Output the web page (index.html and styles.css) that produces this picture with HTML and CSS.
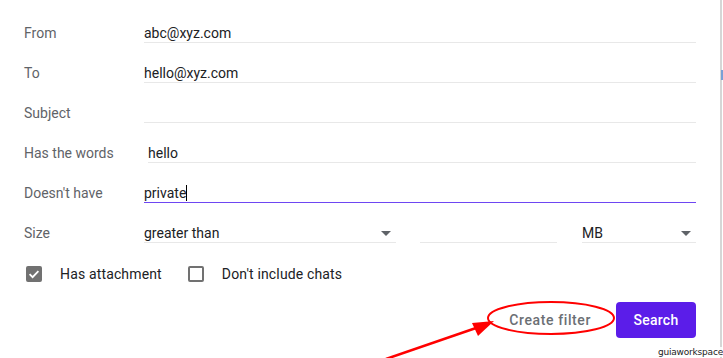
FILE: index.html
```html
<!DOCTYPE html>
<html lang="en">
<head>
  <meta charset="UTF-8" />
  <meta name="viewport" content="width=device-width, initial-scale=1.0"/>
  <title>Search filter</title>
  <link rel="stylesheet" href="styles.css">
</head>
<body>
  <div class="dialog">
    <div class="row">
      <span class="label">From</span>
      <span class="field">abc@xyz.com</span>
    </div>
    <div class="row">
      <span class="label">To</span>
      <span class="field">hello@xyz.com</span>
    </div>
    <div class="row">
      <span class="label">Subject</span>
      <span class="field"></span>
    </div>
    <div class="row">
      <span class="label">Has the words</span>
      <span class="field indent">hello</span>
    </div>
    <div class="row">
      <span class="label">Doesn't have</span>
      <span class="field focused">private<span class="caret"></span></span>
    </div>
    <div class="row">
      <span class="label">Size</span>
      <div class="size-fields">
        <span class="field select compare">greater than<span class="arrow"></span></span>
        <span class="field amount"></span>
        <span class="field select unit">MB<span class="arrow"></span></span>
      </div>
    </div>

    <div class="checks">
      <label class="check"><span class="box checked"><svg viewBox="0 0 16 16" width="16" height="16"><path d="M3.6 8.2l3 3 5.8-6" fill="none" stroke="#fff" stroke-width="1.8"/></svg></span>Has attachment</label>
      <label class="check"><span class="box"></span>Don't include chats</label>
    </div>

    <div class="actions">
      <button class="btn-text">Create filter</button>
      <button class="btn-primary">Search</button>
    </div>
  </div>

  <svg class="annotation" width="723" height="358" viewBox="0 0 723 358">
    <ellipse cx="551" cy="318" rx="63" ry="16" fill="none" stroke="#f00" stroke-width="2"/>
    <line x1="386" y1="359" x2="476" y2="328" stroke="#f00" stroke-width="2.5"/>
    <polygon points="494,321 472,323 478,336" fill="#f00"/>
  </svg>

  <div class="scroll-edge"><span class="thumb"></span></div>
  <span class="watermark">guiaworkspace</span>
</body>
</html>
```

FILE: styles.css
```css
:root {
  --label: #5f6368;
  --text: #202124;
  --line: #e8e8e8;
  --accent: #5b1de9;
  --focus: #6e46f2;
}

body {
  margin: 0;
  background: #fff;
  font-family: Roboto, "Liberation Sans", sans-serif;
  font-size: 14px;
  color: var(--text);
  width: 723px;
  height: 358px;
  overflow: hidden;
  position: relative;
}

.dialog {
  width: 672px;
  margin-left: 24px;
  padding-top: 22px;
  display: flex;
  flex-direction: column;
  gap: 19px;
}

.row {
  display: grid;
  grid-template-columns: 120px 1fr;
  align-items: start;
}

.label {
  line-height: 20px;
  padding-top: 1px;
  height: 19px;
  color: var(--label);
}

.field {
  display: block;
  height: 19px;
  padding-top: 1px;
  line-height: 20px;
  border-bottom: 1px solid var(--line);
  position: relative;
}

.field.indent {
  margin-left: 4px;
}

.field.focused {
  border-bottom-color: var(--focus);
}

.caret {
  display: inline-block;
  width: 1px;
  height: 16px;
  background: #000;
  vertical-align: -3px;
}

.size-fields {
  display: flex;
}

.compare {
  width: 252px;
}

.amount {
  width: 137px;
  margin-left: 24px;
}

.unit {
  width: 114px;
  margin-left: 25px;
}

.arrow {
  position: absolute;
  right: 5px;
  top: 9px;
  width: 0;
  height: 0;
  border-left: 5px solid transparent;
  border-right: 5px solid transparent;
  border-top: 5px solid #5f6368;
}

.checks {
  display: flex;
  gap: 26px;
  margin-top: 2px;
  padding-left: 2px;
}

.check {
  display: flex;
  align-items: center;
  gap: 18px;
  line-height: 20px;
  color: var(--text);
  letter-spacing: 0.15px;
}

.box {
  width: 12px;
  height: 12px;
  border: 2px solid #717171;
  border-radius: 2px;
  position: relative;
}

.box.checked {
  background: #717171;
}

.box svg {
  position: absolute;
  left: -2px;
  top: -2px;
}

.actions {
  display: flex;
  justify-content: flex-end;
  gap: 8px;
  margin-top: -1px;
}

button {
  font-family: Roboto, "Liberation Sans", sans-serif;
  font-size: 14px;
  font-weight: 500;
  letter-spacing: 0.25px;
  height: 36px;
  border: none;
  border-radius: 4px;
  padding: 0 16px;
  cursor: pointer;
}

.btn-text {
  background: transparent;
  color: #6b6f74;
  letter-spacing: 0.6px;
  padding: 0 17px 0 14px;
}

.btn-primary {
  background: var(--accent);
  color: #fff;
  width: 80px;
}

.annotation {
  position: absolute;
  left: 0;
  top: 0;
  pointer-events: none;
}

.scroll-edge {
  position: absolute;
  left: 720px;
  top: 0;
  width: 2px;
  height: 358px;
  background: #d6d6d6;
}

.thumb {
  position: absolute;
  left: 1px;
  top: 70px;
  width: 2px;
  height: 10px;
  background: #7a9fd6;
}

.watermark {
  position: absolute;
  right: 0;
  bottom: 1px;
  font-family: "DejaVu Sans", sans-serif;
  font-size: 9px;
  letter-spacing: -0.2px;
  color: #222;
  background: rgba(255, 255, 255, 0.85);
  padding: 0 0 0 2px;
}
```
